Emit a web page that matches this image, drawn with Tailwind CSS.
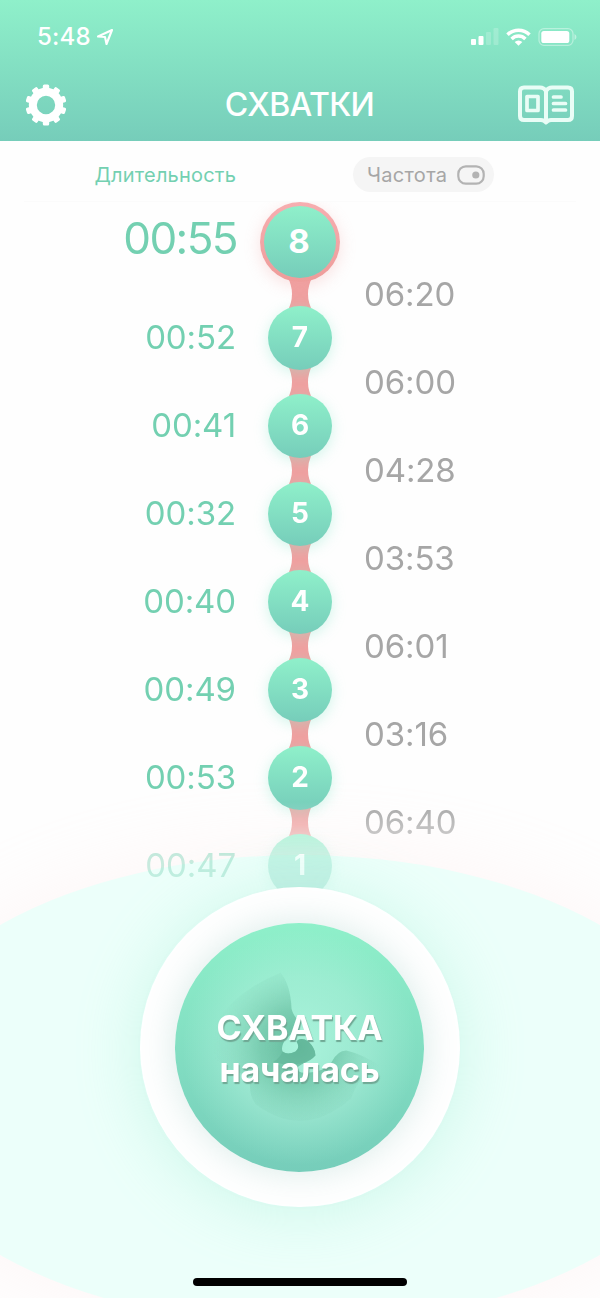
<!DOCTYPE html>
<html lang="ru">
<head>
<meta charset="utf-8">
<title>Схватки</title>
<script src="https://cdn.jsdelivr.net/npm/@tailwindcss/browser@4"></script>
</head>
<body class="bg-[#fefefe]">
<div class="relative flex h-[1298px] w-[600px] flex-col overflow-hidden font-['Inter',sans-serif]">

  <header class="z-10 flex h-[141px] shrink-0 flex-col bg-linear-to-b from-[#8ff0ca] to-[#76cdba] text-white">
    <div class="flex h-[74px] items-center justify-between pr-[23px] pl-[37px]">
      <div class="flex items-center gap-[5px]">
        <span class="text-[24px] leading-none font-medium tracking-[0.2px]">5:48</span>
        <svg class="size-[18px]" viewBox="0 0 18 18" fill="none" stroke="currentColor" stroke-width="2.100" stroke-linejoin="round"><path d="M16 2 2 8.500 9 9 10.500 16z"/></svg>
      </div>
      <div class="flex items-center gap-[7px]">
        <svg class="h-[18px] w-[28px]" viewBox="0 0 28 18" fill="currentColor"><rect y="11" width="5" height="6" rx="1"/><rect x="7.500" y="8" width="5" height="9" rx="1"/><rect x="15" y="4" width="5" height="13" rx="1" opacity=".2"/><rect x="22.500" y="0" width="5" height="17" rx="1" opacity=".2"/></svg>
        <svg class="h-[18px] w-[25px]" viewBox="0 0 25 18" fill="none" stroke="currentColor" stroke-width="3.500"><path d="M1.500 6.700a15.600 15.600 0 0 1 22 0M5.600 10.900a9.800 9.800 0 0 1 13.800 0"/><path d="M12.500 17.800 8.700 14a5.400 5.400 0 0 1 7.600 0z" fill="currentColor" stroke="none"/></svg>
        <svg class="h-[18px] w-[39px]" viewBox="0 0 39 18"><rect x="1" y=".7" width="34" height="16.600" rx="5" fill="none" stroke="#fff" stroke-opacity=".4" stroke-width="1.300"/><rect x="3.300" y="3" width="28" height="12" rx="2.600" fill="#fff"/><path d="M36.500 6v6q2-1 2-3t-2-3" fill="#fff" opacity=".45"/></svg>
      </div>
    </div>
    <div class="grid h-[62px] grid-cols-[1fr_auto_1fr] items-center pr-[26px] pl-[25px]">
      <svg class="size-[42px]" viewBox="-21 -21 42 42" fill="currentColor">
        <path fill-rule="evenodd" d="M0-17.200A17.200 17.200 0 1 1 0 17.200 17.200 17.200 0 1 1 0-17.200M0-9.200A9.200 9.200 0 1 0 0 9.200 9.200 9.200 0 1 0 0-9.200"/>
        <g id="t"><rect x="-3.200" y="-20.500" width="6.400" height="6" rx="1.500"/><rect x="-3.200" y="14.500" width="6.400" height="6" rx="1.500"/></g>
        <use href="#t" transform="rotate(36)"/><use href="#t" transform="rotate(72)"/><use href="#t" transform="rotate(108)"/><use href="#t" transform="rotate(144)"/>
      </svg>
      <h1 class="text-[32px] leading-none font-medium tracking-[-0.6px]">СХВАТКИ</h1>
      <svg class="h-[40px] w-[56px] justify-self-end" viewBox="0 0 56 40" fill="none" stroke="#e9fdf6" stroke-width="4" stroke-linecap="round" stroke-linejoin="round">
        <path d="M28 6Q26 2.500 22 2.500H6Q2 2.500 2 6.500V31Q2 35 6 35H23Q26 35 28 37.500 30 35 33 35H50Q54 35 54 31V6.500Q54 2.500 50 2.500H34Q30 2.500 28 6V36"/>
        <path d="M9 11.500H20V25.500H9zM35.500 12H43M35.500 18.500H47.500M35.500 25H47.500" stroke-width="3.700"/>
      </svg>
    </div>
  </header>

  <main class="flex flex-col">
    <div class="mx-6 flex h-[61px] items-start border-b border-[#fbfbfb] pt-4">
      <div class="flex h-[35px] w-[212px] items-center justify-end text-[20px] tracking-[0.200px] text-[#73d0b1]"><span>Длительность</span></div>
      <button class="ml-[117px] flex h-[35px] w-[141px] items-center justify-between rounded-full bg-[#f5f5f5] pr-[9px] pl-[14px] text-[20px] tracking-[0.300px] text-[#a6a6a6]">
        <span>Частота</span>
        <svg class="h-[20px] w-[28px]" viewBox="0 0 28 20"><rect x="1.300" y="1.300" width="25.400" height="17.400" rx="7.500" fill="none" stroke="#b3b3b3" stroke-width="2.200"/><circle cx="18.800" cy="10" r="3.600" fill="#b3b3b3"/></svg>
      </button>
    </div>

    <section class="z-10 grid h-[700px] grid-cols-[236px_80px_1fr] gap-x-6 overflow-hidden mask-[linear-gradient(to_bottom,#000_600px,#0009_634px,#0006_655px,#0005_690px)]">
      <div class="flex flex-col items-end text-[33px] tracking-[-0.100px] text-[#73d0b1]">
        <div class="-mr-px mb-3 flex h-[71px] items-center text-[44px] leading-none tracking-[-1.600px]">00:55</div>
        <div class="mt-[10px] flex h-[86px] items-center">00:52</div>
        <div class="mt-0.5 flex h-[86px] items-center">00:41</div>
        <div class="mt-0.5 flex h-[86px] items-center">00:32</div>
        <div class="mt-0.5 flex h-[86px] items-center">00:40</div>
        <div class="mt-0.5 flex h-[86px] items-center">00:49</div>
        <div class="mt-0.5 flex h-[86px] items-center">00:53</div>
        <div class="mt-0.5 flex h-[86px] items-center">00:47</div>
      </div>
      <div id="chain" class="flex flex-col items-center text-[28px] font-bold text-white">
        <div class="z-10 flex size-[80px] shrink-0 items-center justify-center rounded-full bg-linear-to-b from-[#f7aeb0] to-[#ee9c9a] p-1 text-[33px] shadow-[0_4px_16px_#f0a0a04d]">
          <div class="flex size-full items-center justify-center rounded-full bg-linear-to-b from-[#8ff0ca] to-[#76cdba] pr-0.5">8</div>
        </div>
      </div>
      <div class="flex flex-col pt-[49px] text-[33px] tracking-[-0.100px] text-[#a6a6a6]">
        <div class="flex h-[88px] shrink-0 items-center">06:20</div>
        <div class="flex h-[88px] shrink-0 items-center">06:00</div>
        <div class="flex h-[88px] shrink-0 items-center">04:28</div>
        <div class="flex h-[88px] shrink-0 items-center">03:53</div>
        <div class="flex h-[88px] shrink-0 items-center">06:01</div>
        <div class="flex h-[88px] shrink-0 items-center">03:16</div>
        <div class="flex h-[88px] shrink-0 items-center">06:40</div>
      </div>
    </section>
  </main>

  <div class="absolute top-[855px] left-[-121px] h-[470px] w-[842px] rounded-[50%] bg-[#ecfffa] shadow-[0_0_80px_#ffe0e04d]"></div>

  <div class="absolute top-[887px] left-[139.500px] z-20 flex size-[320px] items-center justify-center rounded-full bg-white shadow-[0_4px_64px_#8ee8cc55]">
    <button class="relative flex size-[249px] flex-col items-center justify-center rounded-full bg-linear-to-b from-[#8ff0ca] to-[#76cdba] pt-1 text-[34px] leading-[42px] font-bold tracking-[-0.150px] text-white shadow-[0_0_36px_#7fb8b04d]">
      <svg class="absolute inset-0 size-full" viewBox="175 922 250 250">
        <defs>
          <radialGradient id="glow"><stop offset="0" stop-color="#b4f9e2" stop-opacity=".8"/><stop offset=".6" stop-color="#b4f3df" stop-opacity=".45"/><stop offset="1" stop-color="#b4f3df" stop-opacity="0"/></radialGradient>
          <radialGradient id="shade" gradientUnits="userSpaceOnUse" cx="298" cy="1046" r="84"><stop offset="0" stop-color="#62b89a"/><stop offset=".45" stop-color="#6ec3a6" stop-opacity=".75"/><stop offset="1" stop-color="#7fd0b5" stop-opacity="0"/></radialGradient>
          <filter id="soft"><feGaussianBlur stdDeviation=".8"/></filter>
        </defs>
        <circle cx="300" cy="1047" r="118" fill="url(#glow)"/>
        <path fill="url(#shade)" filter="url(#soft)" d="M281 972Q291 984 292 1008 294 1016 299 1019 296 1031 286 1039 281 1046 283 1051 288 1055 296 1051 301 1047 297 1041 301 1036 309 1041 316 1048 316 1055 312 1060 302 1064 293 1069 302 1072 322 1074 332 1062 338 1050 347 1050 364 1054 382 1066 358 1076 352 1098 304 1140 256 1104 248 1094 251 1076 224 1070 206 1048 220 996 281 972Z"/>
        <path fill="#62b69a" d="M283 1051Q288 1055 296 1051 301 1047 297 1041 301 1036 309 1041 316 1048 316 1055 312 1060 301 1063 287 1066 274 1061 280 1058 283 1051Z" opacity=".6"/>
      </svg>
      <span class="relative [text-shadow:1px_2px_1px_#6fa894]">СХВАТКА</span>
      <span class="relative [text-shadow:1px_2px_1px_#6fa894]">началась</span>
    </button>
  </div>

  <div class="absolute top-[1278px] left-[193px] z-20 h-[8px] w-[214px] rounded-full bg-black"></div>
</div>

<template id="node">
  <svg class="-my-[6px] h-[36px] w-[32px] shrink-0" viewBox="0 0 32 36"><path d="M3 0Q13 18 3 36H29Q19 18 29 0Z" fill="#f0a0a0"/></svg>
  <div class="z-10 flex size-[64px] shrink-0 items-center justify-center rounded-full bg-linear-to-b from-[#8ff0ca] to-[#76cdba] pb-0.5 shadow-[0_3px_14px_#8ee8cc66]"></div>
</template>
<script>
  const chain = document.getElementById('chain');
  const tpl = document.getElementById('node');
  for (let n = 7; n > 0; n--) {
    const node = tpl.content.cloneNode(true);
    node.querySelector('div').textContent = n;
    chain.append(node);
  }
</script>
</body>
</html>
